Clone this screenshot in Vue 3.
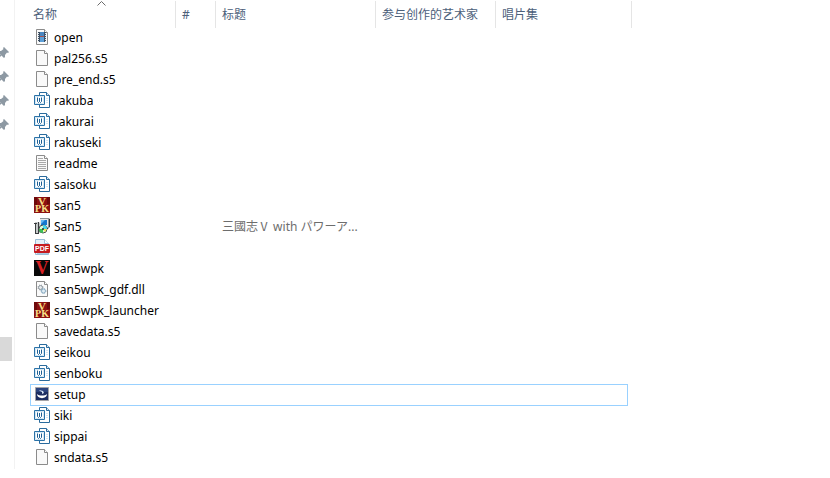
<template>
  <main class="explorer">
    <!-- Icon sprite -->
    <svg class="sprite" aria-hidden="true">
      <symbol id="icon-file" viewBox="0 0 16 16">
        <path d="M2.5.5h8l3 3v12h-11z" fill="#f9f9f9" stroke="#8b8b8b" />
        <path d="M10.5.5v3h3" fill="#fff" stroke="#8b8b8b" />
      </symbol>
      <symbol id="icon-text" viewBox="0 0 16 16">
        <path d="M2.5.5h8l3 3v12h-11z" fill="#fafafa" stroke="#8b8b8b" />
        <path d="M10.5.5v3h3" fill="#fff" stroke="#8b8b8b" />
        <path d="M4 3.5h5M4 5.5h8M4 7.5h8M4 9.5h8M4 11.5h8M4 13.5h8" stroke="#a9a9a9" />
      </symbol>
      <symbol id="icon-video" viewBox="0 0 16 16">
        <path d="M2.5.5h8l3 3v12h-11z" fill="#fafafa" stroke="#8b8b8b" />
        <path d="M10.5.5v3h3" fill="#fff" stroke="#8b8b8b" />
        <path d="M4 3h8v10H4z" fill="#3d5064" />
        <path d="M6 3h4v4H6z" fill="#4a86c0" />
        <path d="M6 8h4v5H6z" fill="#5c9fd8" />
        <path d="M6 7h4v1H6z" fill="#a8504c" />
        <path d="M4.5 4v9M11.5 4v9" stroke="#e4ebf0" stroke-dasharray="1 1" />
      </symbol>
      <symbol id="icon-word" viewBox="0 0 16 16">
        <path d="M5.5.5h7l3 3v12h-10z" fill="#fff" stroke="#2a6b9d" />
        <path d="M12.5.5v3h3" fill="#d9e9f5" stroke="#2a6b9d" />
        <path d="M.5 3.5h10v9H.5z" fill="#fff" stroke="#2a72a8" />
        <path d="M1.5 4.5h8v7h-8z" fill="none" stroke="#d3e6f3" />
        <path d="M3.5 5.500v4l1 1 1-1V6v3.500l1 1 1-1v-4" fill="none" stroke="#1c5f94" />
        <path d="M12 6.500h2M12 8.500h2M12 10.500h2" stroke="#d3e6f3" />
      </symbol>
      <symbol id="icon-wpk" viewBox="0 0 16 16">
        <path d="M0 0h16v16H0z" fill="#8c1010" />
        <path d="M0 0h3v8H0zM13 0h3v7h-3z" fill="#6d0a0a" />
      </symbol>
      <symbol id="icon-game" viewBox="0 0 16 16">
        <path d="M0 0h16v16H0z" fill="#080808" />
      </symbol>
      <symbol id="icon-installer" viewBox="0 0 16 16">
        <path d="M6 0h9l1 1v8l-2 2H6z" fill="#8d9499" />
        <path d="M6 1h8v8H6z" fill="#e3e7e9" />
        <path d="M7 2h6v5H7z" fill="#1577cf" />
        <path d="M7 2h4L7 6z" fill="#63b8f2" />
        <path d="M15.500 1v8M7 10.500h7" stroke="#30363a" />
        <path d="M1 4h4l1 1v10H1z" fill="#c5c8c9" />
        <path d="M0 5.500h3M4.500 4v11M1.500 6v10M1 15.500h4" fill="none" stroke="#3a3d3f" />
        <circle cx="9" cy="11" r="4" fill="#dff6d8" stroke="#4a5050" />
        <path d="M9 11V7a4 4 0 0 1 4 4z" fill="#47dced" />
        <path d="M9 11v4a4 4 0 0 1-4-4z" fill="#3bbf57" />
        <path d="M9 11h4l-2 3z" fill="#f3e34c" />
        <circle cx="9" cy="11" r="1" fill="#203030" />
      </symbol>
      <symbol id="icon-pdf" viewBox="0 0 16 16">
        <path d="M1.500 5V.5h9l4 4v11h-13z" fill="#e4f0f9" stroke="#9dbdd6" />
        <path d="M10.500.5v4h4" fill="#fff" stroke="#9dbdd6" />
        <path d="M3 13h11v2H3z" fill="#a9cbe3" />
        <rect y="5" width="16" height="9" rx="1" fill="#c51b20" />
      </symbol>
      <symbol id="icon-dll" viewBox="0 0 16 16">
        <path d="M2.500.5h8l3 3v12h-11z" fill="#fafafa" stroke="#8b8b8b" />
        <path d="M10.500.5v3h3" fill="#fff" stroke="#8b8b8b" />
        <circle cx="6.500" cy="6.500" r="2" fill="#e5e9ec" stroke="#8f989f" />
        <circle cx="6.500" cy="6.500" r="2.500" fill="none" stroke="#8f989f" stroke-dasharray="1 1" />
        <circle cx="9.500" cy="10" r="2" fill="#e0edf5" stroke="#8eafc5" />
        <circle cx="9.500" cy="10" r="2.500" fill="none" stroke="#8eafc5" stroke-dasharray="1 1" />
      </symbol>
      <symbol id="icon-setup" viewBox="0 0 16 16">
        <path d="M1.500 1.500h13v13h-13z" fill="#1d2e62" stroke="#a3a3a8" />
        <path d="M2 2h12v4H2z" fill="#2b437e" />
        <path d="M3 8c0 5.500 10 5.500 10 0-2 2-8 2-10 0z" fill="#fff" />
        <path d="M5 4l4 1 1 2-2 1V6L6 5z" fill="#d9e5f5" />
      </symbol>
      <symbol id="icon-pin" viewBox="0 0 12 12">
        <path d="M7 0l5 5-1 1-1-.5L8 8v2L7 11 4.500 8.500 1 12H0v-1l3.500-3.500L1 5l1-1h2l2.500-2L6 1z" fill="#8d99a3" />
      </symbol>
    </svg>

    <aside class="sidebar" aria-label="快速访问">
      <button v-for="n in 4" :key="n" class="pin" type="button" aria-label="取消固定">
        <svg><use href="#icon-pin" /></svg>
      </button>
      <div class="current"></div>
    </aside>

    <table class="files">
      <colgroup>
        <col v-for="column in columns" :key="column.key" :class="'col-' + column.key">
      </colgroup>
      <thead>
        <tr>
          <th v-for="column in columns" :key="column.key" scope="col">
            <button type="button" @click="sortBy(column.key)">{{ column.label }}</button>
            <svg v-if="sortKey === column.key" class="arrow" :class="{ down: !ascending }" viewBox="0 0 9 5">
              <path d="M.5 4.500l4-4 4 4" fill="none" stroke="#6b6b6b" />
            </svg>
          </th>
        </tr>
      </thead>
      <tbody>
        <tr
          v-for="file in sortedFiles"
          :key="file.id"
          :class="{ selected: file.id === selected }"
          @click="selected = file.id"
        >
          <td>
            <div class="name">
              <svg class="icon" viewBox="0 0 16 16">
                <use :href="'#icon-' + file.icon" />
                <text
                  v-for="mark in marks[file.icon]"
                  :key="mark.text"
                  x="8"
                  :y="mark.y"
                  :class="mark.type"
                  :font-size="mark.size"
                  :fill="mark.color"
                >{{ mark.text }}</text>
              </svg>
              <span>{{ file.name }}</span>
            </div>
          </td>
          <td></td>
          <td class="detail">{{ file.title }}</td>
          <td></td>
          <td></td>
        </tr>
      </tbody>
    </table>
  </main>
</template>

<script setup>
import { ref, computed } from 'vue';

const columns = [
  { key: 'name', label: '名称' },
  { key: 'track', label: '#' },
  { key: 'title', label: '标题' },
  { key: 'artist', label: '参与创作的艺术家' },
  { key: 'album', label: '唱片集' },
];

// lettering on top of the icons
const marks = {
  wpk: [
    { text: 'V', y: 8, size: 11, type: 'serif', color: '#f8e08a' },
    { text: 'PK', y: 15, size: 10, type: 'serif', color: '#f8e08a' },
  ],
  game: [{ text: 'V', y: 14, size: 18, type: 'serif', color: '#d82024' }],
  pdf: [{ text: 'PDF', y: 12, size: 7, type: 'sans', color: '#fff' }],
};

const files = [
  { id: 1, name: 'open', icon: 'video' },
  { id: 2, name: 'pal256.s5', icon: 'file' },
  { id: 3, name: 'pre_end.s5', icon: 'file' },
  { id: 4, name: 'rakuba', icon: 'word' },
  { id: 5, name: 'rakurai', icon: 'word' },
  { id: 6, name: 'rakuseki', icon: 'word' },
  { id: 7, name: 'readme', icon: 'text' },
  { id: 8, name: 'saisoku', icon: 'word' },
  { id: 9, name: 'san5', icon: 'wpk' },
  { id: 10, name: 'San5', icon: 'installer', title: '三國志Ⅴ with パワーア...' },
  { id: 11, name: 'san5', icon: 'pdf' },
  { id: 12, name: 'san5wpk', icon: 'game' },
  { id: 13, name: 'san5wpk_gdf.dll', icon: 'dll' },
  { id: 14, name: 'san5wpk_launcher', icon: 'wpk' },
  { id: 15, name: 'savedata.s5', icon: 'file' },
  { id: 16, name: 'seikou', icon: 'word' },
  { id: 17, name: 'senboku', icon: 'word' },
  { id: 18, name: 'setup', icon: 'setup' },
  { id: 19, name: 'siki', icon: 'word' },
  { id: 20, name: 'sippai', icon: 'word' },
  { id: 21, name: 'sndata.s5', icon: 'file' },
];

const selected = ref(18);
const sortKey = ref('name');
const ascending = ref(true);

// files are already listed in name order
const sortedFiles = computed(() => {
  const list = [...files];
  if (sortKey.value !== 'name') {
    list.sort((a, b) => (a[sortKey.value] || '').localeCompare(b[sortKey.value] || ''));
  }
  return ascending.value ? list : list.reverse();
});

const sortBy = (key) => {
  ascending.value = sortKey.value === key ? !ascending.value : true;
  sortKey.value = key;
};
</script>

<style>
body {
  background: #fff;
}
</style>

<style scoped>
.explorer {
  display: flex;
  font-family: "Noto Sans", "Noto Sans CJK SC", sans-serif;
  font-size: 12px;
  color: #000;
}

.sprite {
  position: absolute;
  width: 0;
  height: 0;
}

.serif,
.sans {
  font-family: "Liberation Serif", serif;
  font-weight: bold;
  text-anchor: middle;
}

.sans {
  font-family: "Liberation Sans", sans-serif;
}

/* Sidebar */
.sidebar {
  box-sizing: border-box;
  flex: none;
  width: 15px;
  padding-top: 41px;
  border-right: 1px solid #f2f2f2;
  overflow: hidden;
}

.pin {
  display: flex;
  align-items: center;
  justify-content: flex-end;
  width: 9px;
  height: 24px;
  padding: 0;
  border: none;
  background: none;
}

.pin svg {
  flex: none;
  width: 12px;
  height: 12px;
}

.current {
  width: 12px;
  height: 24px;
  margin-top: 200px;
  background: #d9d9d9;
}

/* File list */
.files {
  width: 602px;
  margin: 0 0 1px 15px;
  border-collapse: collapse;
  table-layout: fixed;
}

.col-name {
  width: 146px;
}

.col-track {
  width: 40px;
}

.col-title {
  width: 160px;
}

.col-artist {
  width: 120px;
}

th {
  position: relative;
  height: 27px;
  padding: 0;
}

th::after {
  content: '';
  position: absolute;
  top: 1px;
  right: 0;
  width: 1px;
  height: 27px;
  background: #e5e5e5;
}

th button {
  display: block;
  width: 100%;
  height: 27px;
  padding: 2px 6px 0;
  border: none;
  background: none;
  font-family: inherit;
  font-size: 12px;
  font-weight: normal;
  line-height: 25px;
  text-align: left;
  white-space: nowrap;
  color: #4c607a;
}

th:first-child button {
  padding-left: 3px;
}

.arrow {
  position: absolute;
  top: 1px;
  left: calc(50% - 6px);
  width: 9px;
  height: 5px;
}

.arrow.down {
  transform: scaleY(-1);
}

tbody tr {
  position: relative;
}

td {
  height: 21px;
  padding: 0;
  line-height: 21px;
}

.name {
  display: flex;
  gap: 4px;
  height: 21px;
  padding-left: 4px;
  white-space: nowrap;
}

.icon {
  flex: none;
  width: 16px;
  height: 16px;
  margin-top: 2px;
  overflow: visible;
}

.detail {
  padding-left: 6px;
  font-family: "Noto Sans", "Noto Sans CJK JP", sans-serif;
  white-space: nowrap;
  color: #6d6d6d;
}

.selected td:first-child::after {
  content: '';
  position: absolute;
  inset: 0 4px -1px 0;
  border: 1px solid #99d1ff;
}
</style>
